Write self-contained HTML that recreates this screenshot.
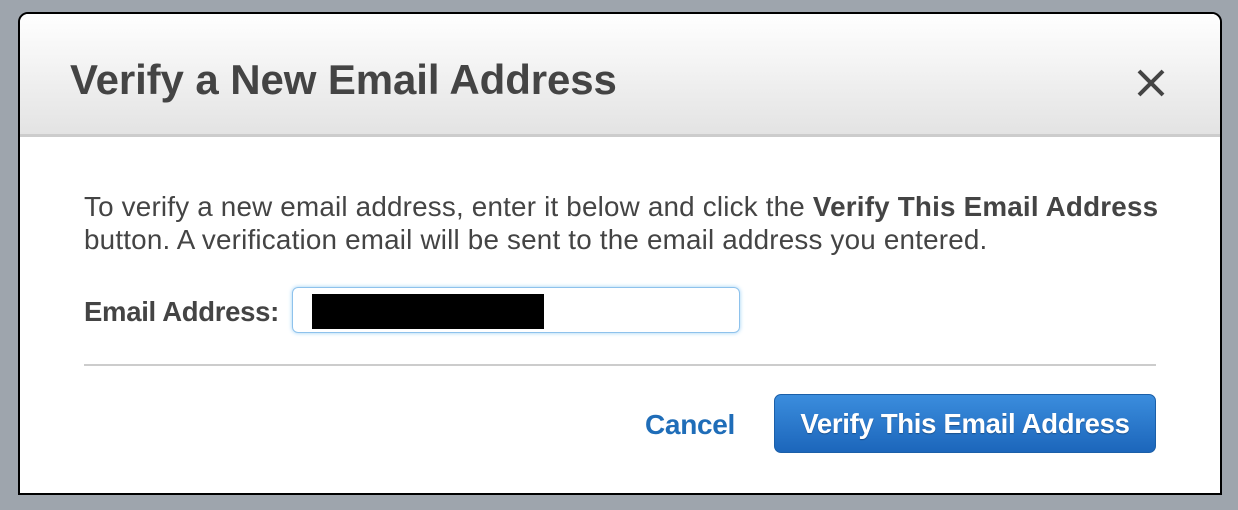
<!DOCTYPE html>
<html><head><style>
body{margin:0;width:1238px;height:510px;background:#9ea5ad;position:relative;overflow:hidden;font-family:"Liberation Sans",Arial,sans-serif}
.dlg{position:absolute;left:18px;top:12px;width:1200px;height:479px;border:2px solid #000;border-radius:10px 10px 0 0;background:#fff;overflow:hidden}
.hd{position:absolute;left:0;top:0;right:0;height:120px;background:linear-gradient(#fff,#e3e3e3);border-bottom:3px solid #ccc}
.t{position:absolute;left:50px;top:42px;font-size:42px;font-weight:bold;color:#444;line-height:48px;letter-spacing:-0.1px}
.x{position:absolute;left:1116px;top:54px}
.p{position:absolute;left:64px;top:176px;font-size:27.8px;line-height:33px;color:#444;width:1130px;letter-spacing:0.2px;white-space:nowrap}
.lbl{position:absolute;left:64px;top:282px;font-size:27.5px;font-weight:bold;color:#444;letter-spacing:-0.3px}
.in{position:absolute;left:272px;top:273px;width:446px;height:44px;border:1px solid #8ec2ec;border-radius:6px;box-shadow:0 0 4px #9cd0f5}
.blk{position:absolute;left:19px;top:6px;width:232px;height:35px;background:#000}
.hr{position:absolute;left:64px;top:350px;width:1072px;height:2px;background:#ccc}
.c{position:absolute;left:625px;top:395px;font-size:28px;font-weight:bold;color:#1f6db8;letter-spacing:-0.3px}
.b{position:absolute;left:754px;top:380px;width:380px;height:57px;border:1px solid #1b5fa8;border-radius:7px;background:linear-gradient(#3b8ddd,#1c66bb);color:#fff;font-size:27.5px;font-weight:bold;text-align:center;line-height:57px;text-shadow:0 1px 1px rgba(0,0,0,.3);letter-spacing:-0.3px}
</style></head><body>
<div class="dlg">
<div class="hd"><div class="t">Verify a New Email Address</div>
<svg class="x" width="30" height="30" viewBox="0 0 30 30"><path d="M3 3L27 27M27 3L3 27" stroke="#444" stroke-width="4"/></svg></div>
<div class="p">To verify a new email address, enter it below and click the <b>Verify This Email Address</b><br>button. A verification email will be sent to the email address you entered.</div>
<div class="lbl">Email Address:</div>
<div class="in"><div class="blk"></div></div>
<div class="hr"></div>
<div class="c">Cancel</div>
<div class="b">Verify This Email Address</div>
</div>
</body></html>
